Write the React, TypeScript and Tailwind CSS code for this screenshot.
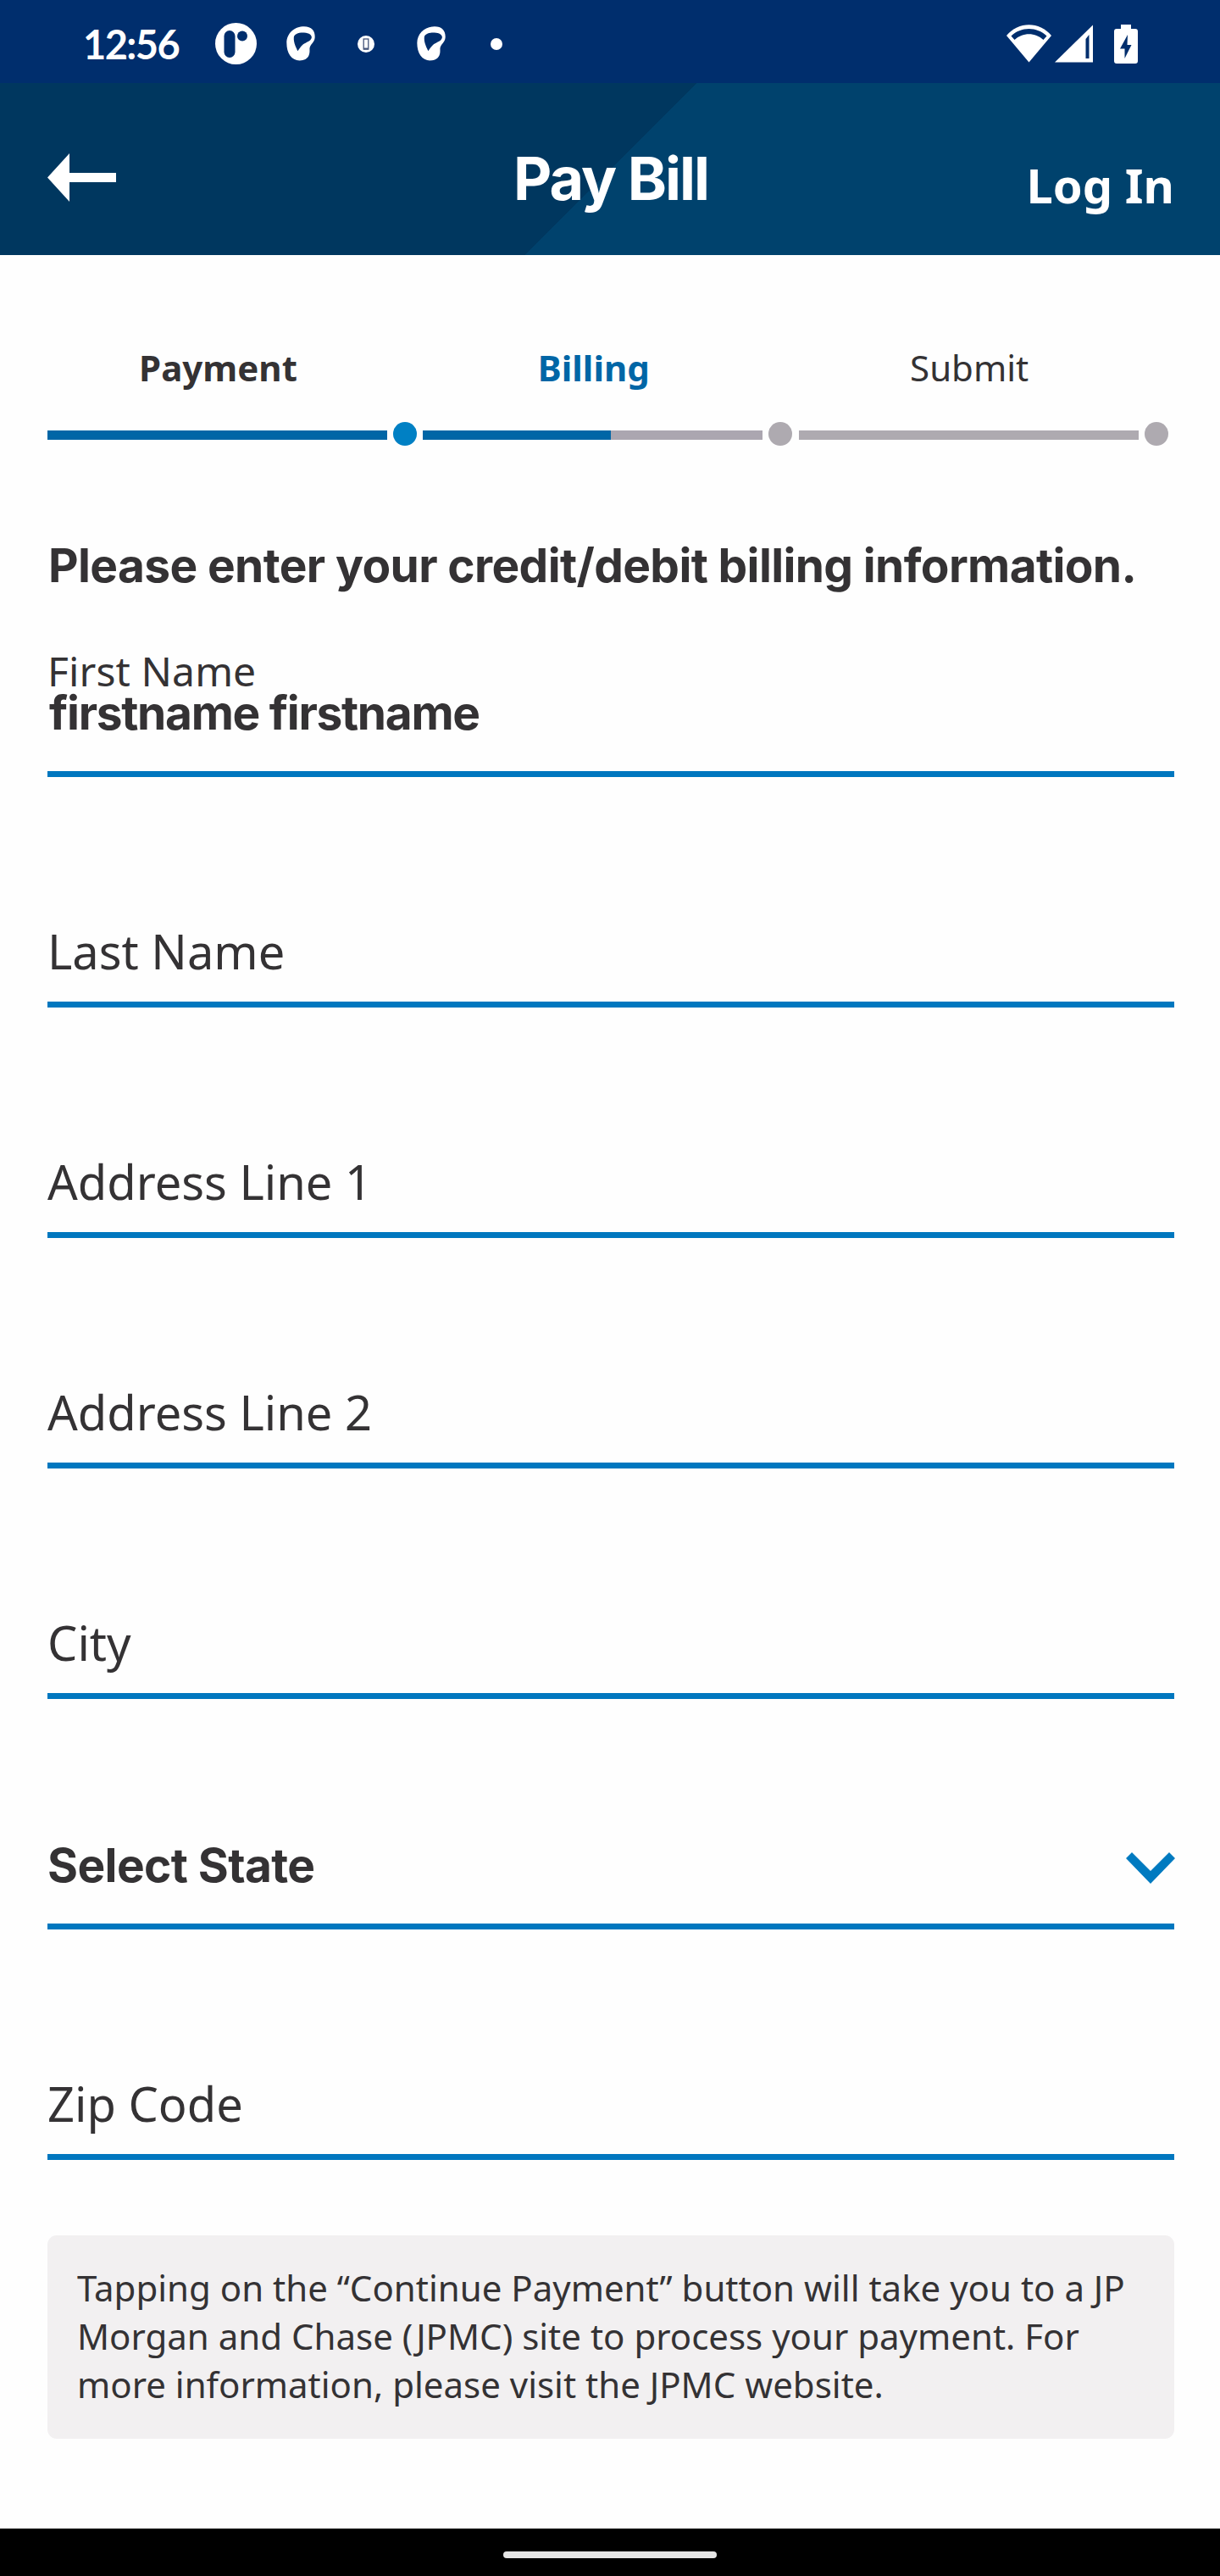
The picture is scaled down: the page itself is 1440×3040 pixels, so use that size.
function FaceIcon() {
  return (
    <svg className="h-[41px] w-[34px]" viewBox="54 45 104 124">
      <path
        fill="#fff"
        fillRule="evenodd"
        d="M55 105C55 68 85 45 118 45C145 45 158 60 157 84C156 103 140 108 138 124C138 134 139 140 135 150C130 162 118 168 102 168C72 168 55 142 55 105ZM81 84C82 72 98 66 118 67C137 68 147 76 145 86C142 98 126 101 114 110C106 117 101 126 95 134C91 124 79 104 81 84Z"
      />
    </svg>
  );
}

function StatusBar() {
  return (
    <div className="flex h-[98px] items-center bg-[#002e6d] pt-[5px] pr-[97px] pl-[98px]">
      <div className="w-[156px] font-['Lato',sans-serif] text-[47px] leading-[48px] font-bold tracking-[-1.6px] text-white">
        12:56
      </div>
      <svg className="h-[49px] w-[49px]" viewBox="0 0 49 49">
        <circle cx="24.5" cy="24.5" r="24.5" fill="#fff" />
        <rect x="10.5" y="9" width="13" height="32" rx="6.5" fill="#002e6d" />
        <circle cx="32" cy="15.5" r="6" fill="#002e6d" />
      </svg>
      <div className="ml-[35px]">
        <FaceIcon />
      </div>
      <svg className="ml-[50px] h-5 w-5" viewBox="0 0 20 20">
        <circle cx="10" cy="10" r="10" fill="#fff" />
        <rect x="7.2" y="4" width="5.6" height="12" fill="none" stroke="#44547a" strokeWidth="1.3" />
        <path d="M7 15.5h6" stroke="#44547a" strokeWidth="2" />
      </svg>
      <div className="ml-[50px]">
        <FaceIcon />
      </div>
      <div className="ml-[53px] size-[14px] rounded-full bg-white" />
      <div className="ml-auto flex items-center">
        <svg className="h-[45px] w-[53px]" viewBox="0 0 53 45">
          <path d="M26.5 44.5L0 13C14-4 39-4 53 13Z" fill="#fff" />
          <path d="M5.5 13.5C17 2 36 2 47.500 13.500L43.500 18C34 9 19 9 9.500 18Z" fill="#002e6d" />
        </svg>
        <svg className="ml-1 h-[45px] w-[45px]" viewBox="0 0 45 45">
          <path d="M0 44.500L45 .5V44.500Z" fill="#fff" />
          <path d="M36.500 17L40.500 12V40H36.500Z" fill="#002e6d" />
        </svg>
        <svg className="ml-[25px] h-[46px] w-7" viewBox="0 0 28 46">
          <path d="M8 0H20V5H25Q28 5 28 8V43Q28 46 25 46H3Q0 46 0 43V8Q0 5 3 5H8Z" fill="#fff" />
          <path d="M16 12L7 28.500H12.500V40L20.500 24H15.500Z" fill="#002e6d" />
        </svg>
      </div>
    </div>
  );
}

function Header() {
  return (
    <header className="grid h-[203px] grid-cols-3 items-center bg-[linear-gradient(135deg,#00375f_0_50%,#00426d_50%)] bg-[length:1443px_203px] bg-no-repeat pr-[54px] pl-14 text-white">
      <button className="justify-self-start pt-5" aria-label="Back">
        <svg className="block h-[57px] w-[81px]" viewBox="0 0 81 57">
          <path d="M0 28.500L26 0V23H81V34H26V57Z" fill="#fff" />
        </svg>
      </button>
      <h1 className="justify-self-center pt-[22px] font-['Inter',sans-serif] text-[70px] leading-[80px] font-bold tracking-[-2px] whitespace-nowrap">
        Pay Bill
      </h1>
      <button className="justify-self-end pt-[36px] text-[56px] leading-[76px] font-bold whitespace-nowrap">
        Log In
      </button>
    </header>
  );
}

function Step({ label, labelClass, bar, dot }: { label: string; labelClass: string; bar: string; dot: string }) {
  return (
    <div className="min-w-0 flex-1">
      <div className={`w-[403px] text-center text-[42px] leading-[56px] ${labelClass}`}>{label}</div>
      <div className="mt-9 flex h-7 items-center gap-[7px]">
        <div className={`mt-[3px] h-[11px] w-[401px] ${bar}`} />
        <div className={`size-7 shrink-0 rounded-full ${dot}`} />
      </div>
    </div>
  );
}

function Field({ label }: { label: string }) {
  return (
    <div className="flex h-[272px] flex-col justify-end border-b-[7px] border-[#0077bf] pb-[22px] text-[56px] leading-[76px]">
      {label}
    </div>
  );
}

export default function App() {
  return (
    <div className="flex h-[3040px] w-[1440px] flex-col bg-[#fefefe] font-['Noto_Sans',sans-serif] text-[#343234]">
      <StatusBar />
      <Header />
      <main className="flex-1 pt-[105px] pr-[54px] pl-14">
        <div className="flex">
          <Step label="Payment" labelClass="font-bold" bar="bg-[#0066a6]" dot="bg-[#0080c4]" />
          <Step
            label="Billing"
            labelClass="font-bold text-[#0066a6]"
            bar="bg-[linear-gradient(90deg,#0066a6_222px,#aba6b0_222px)]"
            dot="bg-[#aeaab0]"
          />
          <Step label="Submit" labelClass="" bar="bg-[#aeaab0]" dot="bg-[#aeaab0]" />
        </div>
        <h2 className="mt-[109px] pl-px font-['Inter',sans-serif] text-[55px] leading-[64px] font-bold tracking-[-0.63px] whitespace-nowrap">
          Please enter your credit/debit billing information.
        </h2>
        <div className="mt-[68px] border-b-[7px] border-[#0077bf] pb-[45px]">
          <div className="text-[48px] leading-[50px] tracking-[0.1px]">First Name</div>
          <div className="pl-0.5 font-['Inter',sans-serif] text-[55px] leading-[48px] font-bold tracking-[-1.3px]">
            firstname firstname
          </div>
        </div>
        <Field label="Last Name" />
        <Field label="Address Line 1" />
        <Field label="Address Line 2" />
        <Field label="City" />
        <div className="flex h-[272px] items-end justify-between border-b-[7px] border-[#0077bf] pb-[31px]">
          <div className="font-['Inter',sans-serif] text-[55px] leading-[76px] font-bold tracking-[-0.6px]">
            Select State
          </div>
          <svg className="-mr-px mb-4 h-[37px] w-[58px]" viewBox="0 0 58 37">
            <path d="M0 7L7 0L29 22L51 0L58 7L29 37Z" fill="#007ac0" />
          </svg>
        </div>
        <Field label="Zip Code" />
        <div className="mt-[89px] h-[240px] rounded-[11px] bg-[#f2f0f1] pt-[33px] pl-[35px] text-[42px] leading-[57px] whitespace-nowrap">
          Tapping on the “Continue Payment” button will take you to a JP
          <br />
          Morgan and Chase (JPMC) site to process your payment. For
          <br />
          more information, please visit the JPMC website.
        </div>
      </main>
      <footer className="flex h-14 justify-center bg-black pt-[27px]">
        <div className="h-2 w-[252px] rounded-full bg-[#e6e6e6]" />
      </footer>
    </div>
  );
}
